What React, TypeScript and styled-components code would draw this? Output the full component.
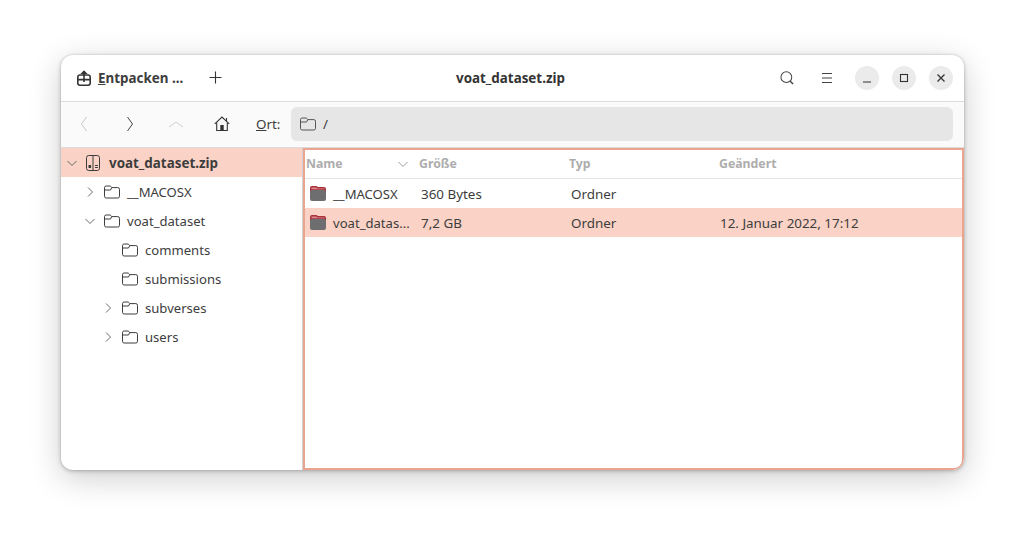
import { FC } from 'react';
import styled, { createGlobalStyle } from 'styled-components';

const GlobalStyle = createGlobalStyle`
  html, body {
    margin: 0;
    height: 100%;
    background: #ffffff;
  }
  body {
    font-family: 'Noto Sans', 'Open Sans', sans-serif;
    font-size: 13.4px;
    color: #3d3d3d;
    overflow: hidden;
  }
`;

const Page = styled.div`
  width: 1025px;
  height: 537px;
  padding: 55px 61px 0;
  box-sizing: border-box;
`;

const Window = styled.div`
  width: 903px;
  height: 415px;
  background: #fff;
  border-radius: 12px;
  overflow: hidden;
  display: flex;
  flex-direction: column;
  box-shadow: 0 0 0 1px rgba(0, 0, 0, 0.03), 0 1px 4px rgba(0, 0, 0, 0.25), 0 8px 32px rgba(0, 0, 0, 0.2);
`;

const HeaderBar = styled.header`
  height: 47px;
  flex: none;
  box-sizing: border-box;
  border-bottom: 1px solid #dcdcdc;
  display: grid;
  grid-template-columns: 1fr auto 1fr;
  align-items: center;
  padding: 0 11px 1px 16px;
`;

const HeaderStart = styled.div`
  display: flex;
  align-items: center;
`;

const HeaderEnd = styled.div`
  display: flex;
  align-items: center;
  justify-content: flex-end;
`;

const ExtractLabel = styled.span`
  font-weight: 700;
  margin-left: 7px;
  width: 111px;
  white-space: nowrap;
`;

const Title = styled.div`
  font-weight: 700;
  color: #333;
  margin-right: 9px;
`;

const PlainIcon = styled.span`
  width: 40px;
  display: flex;
  justify-content: center;
  align-items: center;
`;

const WindowButton = styled.span`
  width: 24px;
  height: 24px;
  border-radius: 50%;
  background: #ebebeb;
  display: flex;
  align-items: center;
  justify-content: center;
  margin-left: 8px;

  & + & {
    margin-left: 13px;
  }
`;

const Toolbar = styled.div`
  height: 46px;
  flex: none;
  box-sizing: border-box;
  background: #fafafa;
  border-bottom: 1px solid #dcdcdc;
  display: flex;
  align-items: center;
  padding: 0 11px 1px 0;
`;

const NavSlot = styled.span`
  width: 46px;
  flex: none;
  display: flex;
  justify-content: center;
`;

const OrtLabel = styled.span`
  width: 35px;
  flex: none;
  margin-left: 11px;
`;

const LocationField = styled.div`
  flex: 1;
  height: 34px;
  background: #e6e6e6;
  border-radius: 6px;
  display: flex;
  align-items: center;
  gap: 7px;
  padding-left: 9px;
`;

const Body = styled.div`
  flex: 1;
  min-height: 0;
  display: flex;
`;

const Sidebar = styled.aside`
  width: 241px;
  flex: none;
  border-right: 1px solid #d2d2d2;
`;

const TreeRow = styled.div<{ $selected?: boolean; $depth: number }>`
  height: 29px;
  display: flex;
  align-items: center;
  padding-left: ${p => 4 + p.$depth * 18}px;
  background: ${p => (p.$selected ? '#fbd3c6' : 'transparent')};
  font-size: ${p => (p.$selected ? 13.4 : 13.1)}px;
  font-weight: ${p => (p.$selected ? 700 : 400)};
`;

const Expander = styled.span`
  width: 14px;
  flex: none;
  display: flex;
  justify-content: center;
`;

const TreeIcon = styled.span`
  width: 16px;
  margin: 0 7px;
  display: flex;
`;

const FilePane = styled.section`
  flex: 1;
  min-width: 0;
  box-sizing: border-box;
  border: 2px solid #eba58f;
  border-bottom-right-radius: 10px;
`;

const ListHeader = styled.div`
  height: 27px;
  display: grid;
  grid-template-columns: 113px 150px 150px 1fr;
  align-items: center;
  border-bottom: 1px solid #e4e4e4;
  color: #adadad;
  font-size: 12.3px;
  font-weight: 700;
  padding: 0 0 1px 1px;
`;

const NameHead = styled.span`
  display: flex;
  justify-content: space-between;
  align-items: center;
  padding-right: 10px;
`;

const FileRow = styled.div<{ $selected?: boolean }>`
  height: 29px;
  display: grid;
  grid-template-columns: 114px 150px 149px 1fr;
  align-items: center;
  background: ${p => (p.$selected ? '#fbd3c6' : 'transparent')};
  padding-left: 2px;
`;

const FileName = styled.span`
  display: flex;
  align-items: center;
  gap: 7px;
  padding-left: 3px;
  font-size: 13.1px;
  white-space: nowrap;
`;

const Chevron: FC<{ dir: 'right' | 'down'; color?: string }> = ({ dir, color = '#6a6a6a' }) => (
  <svg width={12} height={12} viewBox='0 0 12 12' fill='none' stroke={color} strokeWidth='1'>
    <path d={dir === 'right' ? 'M4 1.5 L8.5 6 L4 10.5' : 'M1.5 4 L6 8.5 L10.5 4'} />
  </svg>
);

const FolderOutline: FC<{ color?: string }> = ({ color = '#3d3d3d' }) => (
  <svg width={16} height={14} viewBox='0 0 16 14' fill='none' stroke={color} strokeWidth='1'>
    <path d='M2.2 1H6.2L7.8 2.6H13.8A1.7 1.7 0 0 1 15.5 4.3V11.3A1.7 1.7 0 0 1 13.8 13H2.2A1.7 1.7 0 0 1 .5 11.3V2.7A1.7 1.7 0 0 1 2.2 1Z' />
    <path d='M.5 5H6.5L7.8 2.6' />
  </svg>
);

const ColorFolder: FC = () => (
  <svg width={16} height={15} viewBox='0 0 16 15'>
    <path d='M2 0H6.5L8 1H14A2 2 0 0 1 16 3V6H0V2A2 2 0 0 1 2 0Z' fill='#a8323c' />
    <path d='M1.5 1.6H6.2L7.5 2.6H14.5V3.2H1.5Z' fill='#d98a8a' />
    <path d='M2 4H14A2 2 0 0 1 16 6V13A2 2 0 0 1 14 15H2A2 2 0 0 1 0 13V6A2 2 0 0 1 2 4Z' fill='#6e6e70' />
  </svg>
);

const ArchiveIcon: FC = () => (
  <svg width={14} height={16} viewBox='0 0 14 16' fill='none' stroke='#3d3d3d' strokeWidth='1'>
    <rect x='.5' y='.5' width='13' height='15' rx='2.2' />
    <path d='M7 .5V15.5' />
    <rect x='2.5' y='10' width='2.6' height='3' fill='#3d3d3d' stroke='none' />
    <path d='M9 10.5H12M9 12.5H12' />
  </svg>
);

const ExtractIcon: FC = () => (
  <svg width={14} height={16} viewBox='0 0 14 16' fill='none' stroke='#333' strokeWidth='1.6'>
    <rect x='.8' y='5' width='12.4' height='10.2' rx='2.2' />
    <path d='M1 9.6H13' />
    <path d='M7 12V1' />
    <path d='M3.8 4L7 .8L10.2 4' fill='#333' strokeWidth='1' />
  </svg>
);

const HomeIcon: FC = () => (
  <svg width={16} height={16} viewBox='0 0 16 16' fill='none' stroke='#333' strokeWidth='1.1'>
    <path d='M.8 7.8L8 1L15.2 7.8' />
    <path d='M12.5 2V5' />
    <path d='M2.7 6.5V14.5H13.3V6.5' />
    <rect x='6.3' y='9' width='3.4' height='5.5' fill='#333' stroke='none' />
  </svg>
);

const App: FC = () => (
  <Page>
    <GlobalStyle />
    <Window>
      <HeaderBar>
        <HeaderStart>
          <ExtractIcon />
          <ExtractLabel>
            <u>E</u>ntpacken ...
          </ExtractLabel>
          <svg width={13} height={13} viewBox='0 0 13 13' stroke='#333' strokeWidth='1.1'>
            <path d='M6.5 .5V12.5M.5 6.5H12.5' />
          </svg>
        </HeaderStart>
        <Title>voat_dataset.zip</Title>
        <HeaderEnd>
          <PlainIcon>
            <svg width={14} height={14} viewBox='0 0 15 15' fill='none' stroke='#444' strokeWidth='1.1'>
              <circle cx='6.8' cy='6.6' r='5.8' />
              <path d='M11 11L14 14' strokeWidth='1.6' />
            </svg>
          </PlainIcon>
          <PlainIcon>
            <svg width={12} height={10} viewBox='0 0 12 10' stroke='#444' strokeWidth='1'>
              <path d='M1 .5H11M1 5H11M1 9.5H11' />
            </svg>
          </PlainIcon>
          <WindowButton>
            <svg width={10} height={10} viewBox='0 0 10 10' stroke='#333' strokeWidth='1.2'>
              <path d='M1 9H9' />
            </svg>
          </WindowButton>
          <WindowButton>
            <svg width={10} height={10} viewBox='0 0 10 10' fill='none' stroke='#333' strokeWidth='1.1'>
              <rect x='1.5' y='1.5' width='7' height='7' />
            </svg>
          </WindowButton>
          <WindowButton>
            <svg width={10} height={10} viewBox='0 0 10 10' stroke='#333' strokeWidth='1.3'>
              <path d='M1.5 1.5L8.5 8.5M8.5 1.5L1.5 8.5' />
            </svg>
          </WindowButton>
        </HeaderEnd>
      </HeaderBar>
      <Toolbar>
        <NavSlot>
          <svg width={10} height={18} viewBox='0 0 10 18' fill='none' stroke='#c8c8c8' strokeWidth='1'>
            <path d='M7.5 2L2.5 9L7.5 16' />
          </svg>
        </NavSlot>
        <NavSlot>
          <svg width={10} height={18} viewBox='0 0 10 18' fill='none' stroke='#444' strokeWidth='1'>
            <path d='M2.5 2L7.5 9L2.5 16' />
          </svg>
        </NavSlot>
        <NavSlot>
          <svg width={18} height={10} viewBox='0 0 18 10' fill='none' stroke='#d0d0d0' strokeWidth='1'>
            <path d='M2 8L9 3L16 8' />
          </svg>
        </NavSlot>
        <NavSlot>
          <HomeIcon />
        </NavSlot>
        <OrtLabel>
          <u>O</u>rt:
        </OrtLabel>
        <LocationField>
          <FolderOutline color='#555' />
          <span>/</span>
        </LocationField>
      </Toolbar>
      <Body>
        <Sidebar>
          <TreeRow $selected $depth={0}>
            <Expander><Chevron dir='down' /></Expander>
            <TreeIcon><ArchiveIcon /></TreeIcon>
            voat_dataset.zip
          </TreeRow>
          <TreeRow $depth={1}>
            <Expander><Chevron dir='right' /></Expander>
            <TreeIcon><FolderOutline /></TreeIcon>
            __MACOSX
          </TreeRow>
          <TreeRow $depth={1}>
            <Expander><Chevron dir='down' /></Expander>
            <TreeIcon><FolderOutline /></TreeIcon>
            voat_dataset
          </TreeRow>
          <TreeRow $depth={2}>
            <Expander />
            <TreeIcon><FolderOutline /></TreeIcon>
            comments
          </TreeRow>
          <TreeRow $depth={2}>
            <Expander />
            <TreeIcon><FolderOutline /></TreeIcon>
            submissions
          </TreeRow>
          <TreeRow $depth={2}>
            <Expander><Chevron dir='right' /></Expander>
            <TreeIcon><FolderOutline /></TreeIcon>
            subverses
          </TreeRow>
          <TreeRow $depth={2}>
            <Expander><Chevron dir='right' /></Expander>
            <TreeIcon><FolderOutline /></TreeIcon>
            users
          </TreeRow>
        </Sidebar>
        <FilePane>
          <ListHeader>
            <NameHead>
              Name
              <Chevron dir='down' color='#9a9a9a' />
            </NameHead>
            <span>Größe</span>
            <span>Typ</span>
            <span>Geändert</span>
          </ListHeader>
          <FileRow>
            <FileName><ColorFolder />__MACOSX</FileName>
            <span>360 Bytes</span>
            <span>Ordner</span>
            <span />
          </FileRow>
          <FileRow $selected>
            <FileName><ColorFolder />voat_datas...</FileName>
            <span>7,2 GB</span>
            <span>Ordner</span>
            <span>12. Januar 2022, 17:12</span>
          </FileRow>
        </FilePane>
      </Body>
    </Window>
  </Page>
);

export default App;
